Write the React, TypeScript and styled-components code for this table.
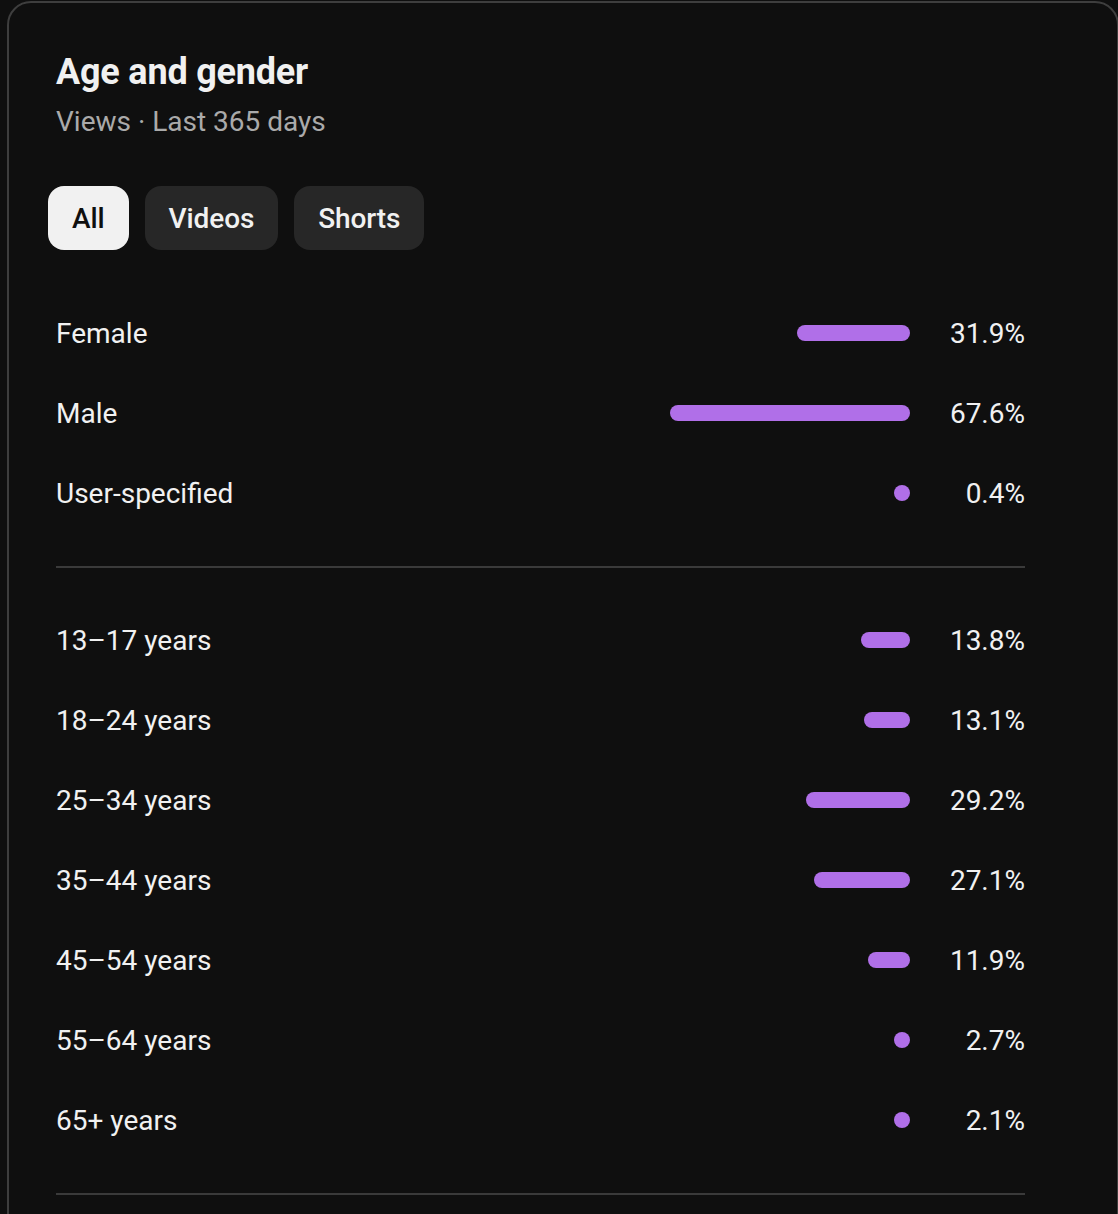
import React from "react";
import styled, { createGlobalStyle } from "styled-components";

const GlobalStyle = createGlobalStyle`
  body {
    margin: 0;
    background: #0f0f0f;
    font-family: Roboto, "Noto Sans", "Liberation Sans", sans-serif;
    color: #f1f1f1;
    overflow: hidden;
  }
`;

const Card = styled.section`
  box-sizing: border-box;
  width: 1112px;
  min-height: 1300px;
  margin: 1px 0 0 7px;
  padding: 47px 48px 47px 47px;
  background: #0f0f0f;
  border: 2px solid #3e3e3e;
  border-radius: 24px;
`;

const Title = styled.h2`
  margin: 0;
  font-size: 36px;
  line-height: 44px;
  font-weight: 700;
  letter-spacing: -0.2px;
  color: #f1f1f1;
`;

const Subtitle = styled.div`
  margin-top: 10px;
  font-size: 28px;
  line-height: 36px;
  color: #aaaaaa;
`;

const Tabs = styled.div`
  display: flex;
  gap: 16px;
  margin-top: 46px;
  margin-left: -8px;
`;

const Tab = styled.button<{ $active?: boolean }>`
  height: 64px;
  padding: 0 24px;
  border: none;
  border-radius: 16px;
  font-family: inherit;
  font-size: 28px;
  font-weight: 500;
  letter-spacing: -0.1px;
  background: ${(p) => (p.$active ? "#f1f1f1" : "#272727")};
  color: ${(p) => (p.$active ? "#0f0f0f" : "#f1f1f1")};
  cursor: pointer;
`;

const Content = styled.div`
  width: 969px;
  margin-top: 43px;
`;

const Row = styled.div`
  display: flex;
  align-items: center;
  height: 80px;
  font-size: 28px;
`;

const Label = styled.span`
  flex: 1;
`;

const Track = styled.div`
  display: flex;
  justify-content: flex-end;
  width: 355px;
`;

const Bar = styled.div`
  height: 16px;
  border-radius: 8px;
  background: #b06fe8;
`;

const Value = styled.span`
  width: 115px;
  text-align: right;
`;

const Divider = styled.div`
  margin: 33px 0 32px;
  height: 2px;
  background: #3a3a3a;
`;

type Stat = { label: string; pct: number };

const gender: Stat[] = [
  { label: "Female", pct: 31.9 },
  { label: "Male", pct: 67.6 },
  { label: "User-specified", pct: 0.4 },
];

const ages: Stat[] = [
  { label: "13–17 years", pct: 13.8 },
  { label: "18–24 years", pct: 13.1 },
  { label: "25–34 years", pct: 29.2 },
  { label: "35–44 years", pct: 27.1 },
  { label: "45–54 years", pct: 11.9 },
  { label: "55–64 years", pct: 2.7 },
  { label: "65+ years", pct: 2.1 },
];

function StatRow({ label, pct }: Stat) {
  const width = Math.max(16, pct * 3.55);
  return (
    <Row>
      <Label>{label}</Label>
      <Track>
        <Bar style={{ width }} />
      </Track>
      <Value>{pct.toFixed(1)}%</Value>
    </Row>
  );
}

export default function App() {
  return (
    <>
      <GlobalStyle />
      <Card>
        <Title>Age and gender</Title>
        <Subtitle>Views · Last 365 days</Subtitle>
        <Tabs>
          <Tab $active>All</Tab>
          <Tab>Videos</Tab>
          <Tab>Shorts</Tab>
        </Tabs>
        <Content>
          {gender.map((s) => (
            <StatRow key={s.label} {...s} />
          ))}
          <Divider />
          {ages.map((s) => (
            <StatRow key={s.label} {...s} />
          ))}
          <Divider />
        </Content>
      </Card>
    </>
  );
}
